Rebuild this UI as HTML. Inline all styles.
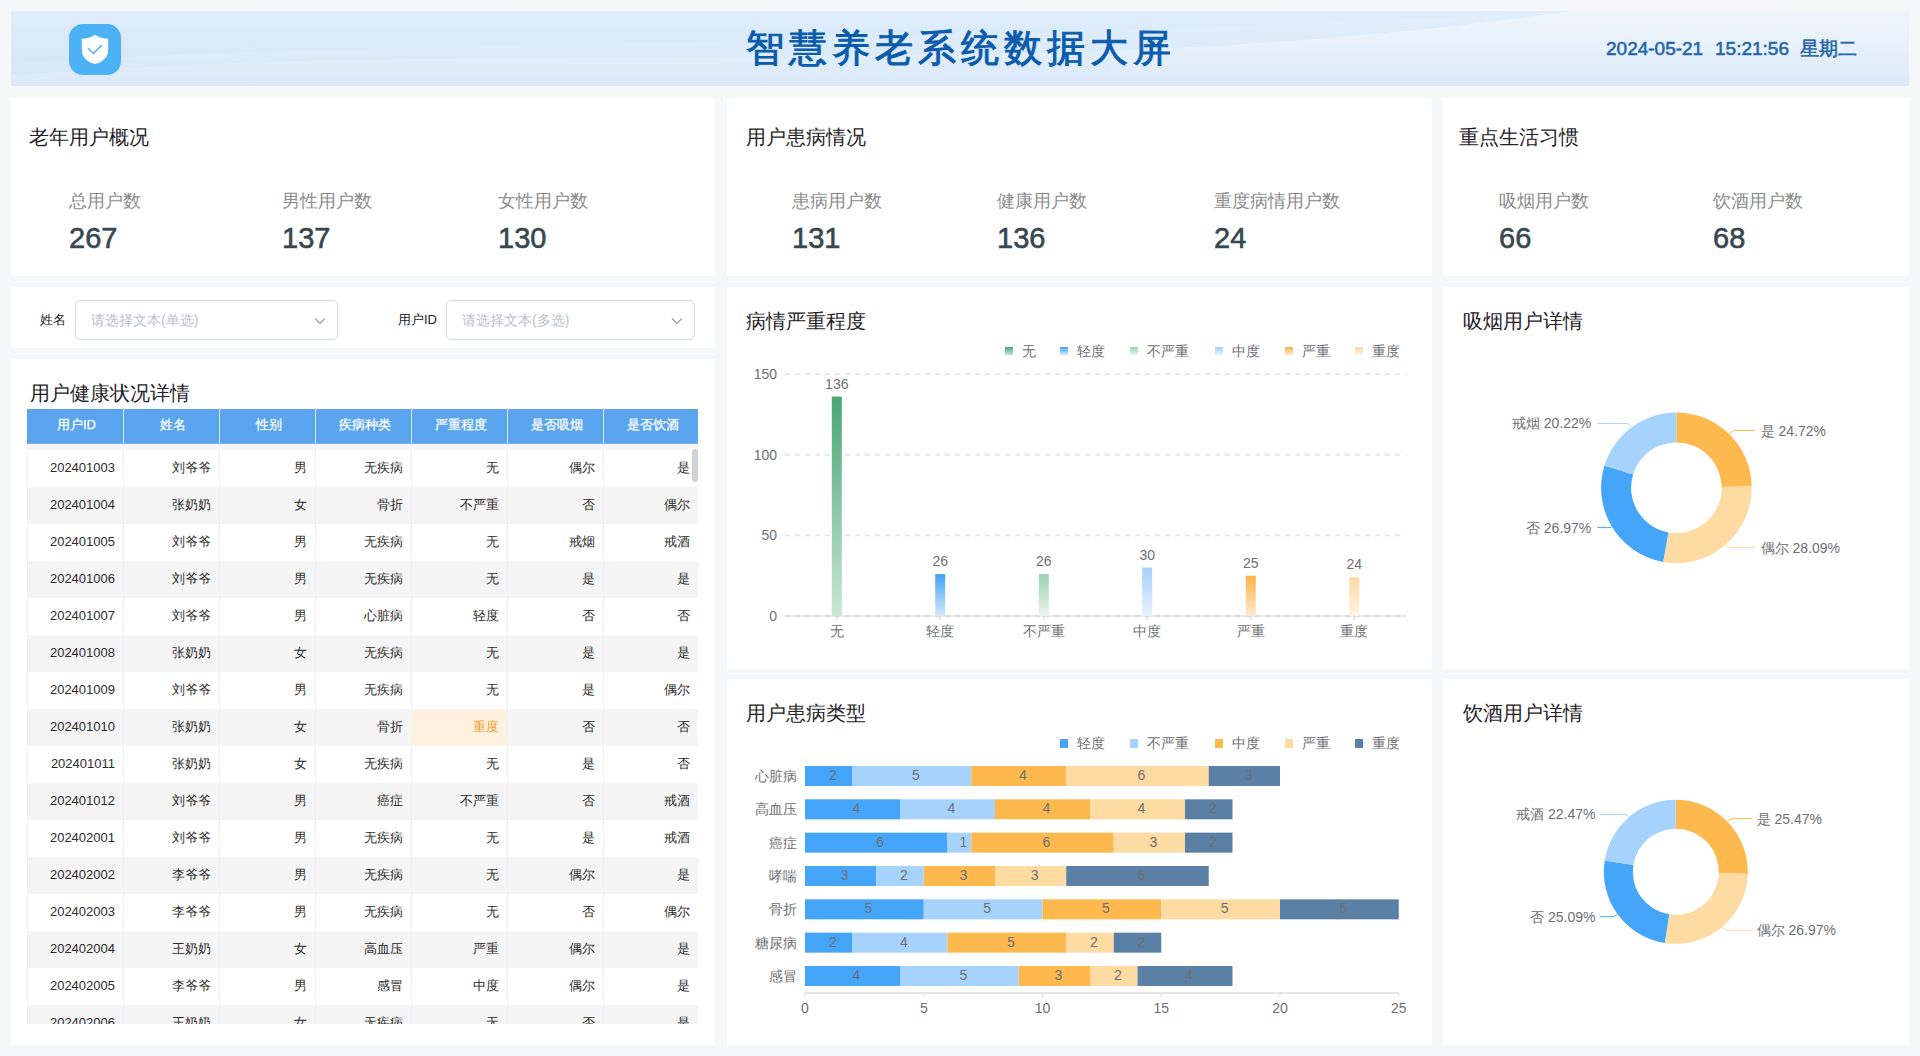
<!DOCTYPE html>
<html lang="zh">
<head>
<meta charset="utf-8">
<title>智慧养老系统数据大屏</title>
<style>
*{box-sizing:border-box;margin:0;padding:0}
html,body{width:1920px;height:1056px;overflow:hidden}
body{position:relative;background:#f5f7f9;font-family:"Liberation Sans",sans-serif;color:#222}
.abs{position:absolute}
.panel{position:absolute;background:#fff}
.ttl{position:absolute;font-size:20px;line-height:20px;color:#1f2329;white-space:nowrap}
.lbl{position:absolute;font-size:18px;line-height:18px;color:#8c8c8c;white-space:nowrap}
.num{position:absolute;font-size:29px;line-height:29px;color:#37474f;font-weight:normal;-webkit-text-stroke:0.6px #37474f;white-space:nowrap}
#hdr{left:11px;top:11px;width:1898px;height:75px;overflow:hidden;background:linear-gradient(180deg,#dfedfb 0%,#d8e8f9 60%,#cfe2f8 100%)}
.th{position:absolute;top:0;width:96px;height:34px;line-height:31px;text-align:center;color:#fff;font-size:13px;border-left:1px solid #d8e9fb;padding-left:3px;-webkit-text-stroke:0.25px #fff}
.th:first-child{border-left:none}
.tr{position:absolute;left:0;width:671px;height:37px}
.td{position:absolute;top:0;width:96px;height:37px;line-height:35px;text-align:right;padding-right:8px;font-size:13px;color:#2b2b2b;white-space:nowrap}
.td.hl{background:#fff1de;color:#f39a2b}
.vsep{position:absolute;top:0;width:1px;height:580px;background:#f0f1f3}
</style>
</head>
<body>
<!-- HEADER -->
<div id="hdr" class="abs">
  <svg class="abs" style="left:0;top:0" width="1898" height="75" viewBox="0 0 1898 75">
    <defs>
      <linearGradient id="hv" x1="0" y1="0" x2="0" y2="1"><stop offset="0" stop-color="#fff" stop-opacity="0.35"/><stop offset="1" stop-color="#fff" stop-opacity="0"/></linearGradient>
    </defs>
    <path d="M0 64 C 120 56, 250 49, 400 48 C 650 46, 900 46, 1100 40 C 1300 32, 1450 16, 1560 0 L1898 0 L1898 75 L0 75 Z" fill="#fff" fill-opacity="0.16"/>
    <path d="M0 52 C 100 46, 250 39, 400 37 C 700 30, 1000 24, 1250 14 C 1400 8, 1500 3, 1560 0 L1898 0 L1898 75 L0 75 Z" fill="#fff" fill-opacity="0.10"/>
    <path d="M1100 40 C 1300 32, 1450 16, 1560 0 L1898 0 L1898 75 L1100 75 Z" fill="url(#hv)"/>
  </svg>
  <div class="abs" style="left:58px;top:13px;width:52px;height:51px;border-radius:14px;background:#4db1f5"></div>
  <svg class="abs" style="left:58px;top:13px" width="52" height="51" viewBox="0 0 52 51">
    <path d="M12.8 14.85 C 17.5 14.8, 22 13.2, 26 10.7 C 30 13.2, 34.5 14.8, 39.2 14.85 L 39.2 26 C 39.2 33, 33.5 38.6, 26 40.1 C 18.5 38.6, 12.8 33, 12.8 26 Z" fill="#fff"/>
    <path d="M19.1 24.2 L 24.5 29.5 L 32.8 21.1" fill="none" stroke="#4db1f5" stroke-width="1.5"/>
  </svg>
  <div class="abs" style="left:735px;top:17px;font-size:38px;line-height:40px;font-weight:normal;-webkit-text-stroke:1px #0b5cad;color:#0b5cad;letter-spacing:5px;white-space:nowrap">智慧养老系统数据大屏</div>
  <div class="abs" style="left:1595px;top:27px;font-size:19px;line-height:22px;-webkit-text-stroke:0.55px #2466a8;color:#2466a8;white-space:nowrap">2024-05-21</div>
  <div class="abs" style="left:1704px;top:27px;font-size:19px;line-height:22px;-webkit-text-stroke:0.55px #2466a8;color:#2466a8;white-space:nowrap">15:21:56</div>
  <div class="abs" style="left:1789px;top:27px;font-size:19px;line-height:22px;-webkit-text-stroke:0.55px #2466a8;color:#2466a8;white-space:nowrap">星期二</div>
</div>

<!-- ROW 1 -->
<div class="panel" style="left:11px;top:98px;width:704px;height:178px">
  <div class="ttl" style="left:18px;top:29px">老年用户概况</div>
  <div class="lbl" style="left:58px;top:94px">总用户数</div>
  <div class="num" style="left:58px;top:126px">267</div>
  <div class="lbl" style="left:271px;top:94px">男性用户数</div>
  <div class="num" style="left:271px;top:126px">137</div>
  <div class="lbl" style="left:487px;top:94px">女性用户数</div>
  <div class="num" style="left:487px;top:126px">130</div>
</div>
<div class="panel" style="left:727px;top:98px;width:705px;height:178px">
  <div class="ttl" style="left:19px;top:29px">用户患病情况</div>
  <div class="lbl" style="left:65px;top:94px">患病用户数</div>
  <div class="num" style="left:65px;top:126px">131</div>
  <div class="lbl" style="left:270px;top:94px">健康用户数</div>
  <div class="num" style="left:270px;top:126px">136</div>
  <div class="lbl" style="left:487px;top:94px">重度病情用户数</div>
  <div class="num" style="left:487px;top:126px">24</div>
</div>
<div class="panel" style="left:1443px;top:98px;width:466px;height:178px">
  <div class="ttl" style="left:16px;top:29px">重点生活习惯</div>
  <div class="lbl" style="left:56px;top:94px">吸烟用户数</div>
  <div class="num" style="left:56px;top:126px">66</div>
  <div class="lbl" style="left:270px;top:94px">饮酒用户数</div>
  <div class="num" style="left:270px;top:126px">68</div>
</div>

<!-- FILTER -->
<div class="panel" style="left:11px;top:287px;width:704px;height:61px">
  <div class="abs" style="left:29px;top:26px;font-size:13px;line-height:14px;color:#222;white-space:nowrap">姓名</div>
  <div class="abs" style="left:64px;top:13px;width:263px;height:40px;border:1px solid #d5d9e2;border-radius:5px"></div>
  <div class="abs" style="left:80px;top:26px;font-size:14px;line-height:14px;color:#bcc0c7;white-space:nowrap">请选择文本(单选)</div>
  <svg class="abs" style="left:303px;top:30px" width="12" height="8" viewBox="0 0 12 8"><path d="M1 1.5 L6 6.5 L11 1.5" fill="none" stroke="#9aa0aa" stroke-width="1.2"/></svg>
  <div class="abs" style="left:387px;top:26px;font-size:13px;line-height:14px;color:#222;white-space:nowrap">用户ID</div>
  <div class="abs" style="left:435px;top:13px;width:249px;height:40px;border:1px solid #d5d9e2;border-radius:5px"></div>
  <div class="abs" style="left:451px;top:26px;font-size:14px;line-height:14px;color:#bcc0c7;white-space:nowrap">请选择文本(多选)</div>
  <svg class="abs" style="left:660px;top:30px" width="12" height="8" viewBox="0 0 12 8"><path d="M1 1.5 L6 6.5 L11 1.5" fill="none" stroke="#9aa0aa" stroke-width="1.2"/></svg>
</div>

<!-- TABLE -->
<div class="panel" style="left:11px;top:359px;width:704px;height:686px">
  <div class="ttl" style="left:19px;top:24px">用户健康状况详情</div>
  <div class="abs" style="left:16px;top:50px;width:671px;height:35px;background:#5ba5ee;border-bottom:1px solid #74b3f1">
<div class="th" style="left:0px;width:96px">用户ID</div>
<div class="th" style="left:96px;width:96px">姓名</div>
<div class="th" style="left:192px;width:96px">性别</div>
<div class="th" style="left:288px;width:96px">疾病种类</div>
<div class="th" style="left:384px;width:96px">严重程度</div>
<div class="th" style="left:480px;width:96px">是否吸烟</div>
<div class="th" style="left:576px;width:95px">是否饮酒</div>
  </div>
  <div class="abs" style="left:16px;top:85px;width:671px;height:580px;overflow:hidden">
<div class="tr" style="top:-31px;background:#f5f5f5">
<div class="td" style="left:0px;width:96px">202401002</div>
<div class="td" style="left:96px;width:96px">刘爷爷</div>
<div class="td" style="left:192px;width:96px">男</div>
<div class="td" style="left:288px;width:96px">无疾病</div>
<div class="td" style="left:384px;width:96px">无</div>
<div class="td" style="left:480px;width:96px">否</div>
<div class="td" style="left:576px;width:95px">否</div>
</div>
<div class="tr" style="top:6px;background:#fff">
<div class="td" style="left:0px;width:96px">202401003</div>
<div class="td" style="left:96px;width:96px">刘爷爷</div>
<div class="td" style="left:192px;width:96px">男</div>
<div class="td" style="left:288px;width:96px">无疾病</div>
<div class="td" style="left:384px;width:96px">无</div>
<div class="td" style="left:480px;width:96px">偶尔</div>
<div class="td" style="left:576px;width:95px">是</div>
</div>
<div class="tr" style="top:43px;background:#f5f5f5">
<div class="td" style="left:0px;width:96px">202401004</div>
<div class="td" style="left:96px;width:96px">张奶奶</div>
<div class="td" style="left:192px;width:96px">女</div>
<div class="td" style="left:288px;width:96px">骨折</div>
<div class="td" style="left:384px;width:96px">不严重</div>
<div class="td" style="left:480px;width:96px">否</div>
<div class="td" style="left:576px;width:95px">偶尔</div>
</div>
<div class="tr" style="top:80px;background:#fff">
<div class="td" style="left:0px;width:96px">202401005</div>
<div class="td" style="left:96px;width:96px">刘爷爷</div>
<div class="td" style="left:192px;width:96px">男</div>
<div class="td" style="left:288px;width:96px">无疾病</div>
<div class="td" style="left:384px;width:96px">无</div>
<div class="td" style="left:480px;width:96px">戒烟</div>
<div class="td" style="left:576px;width:95px">戒酒</div>
</div>
<div class="tr" style="top:117px;background:#f5f5f5">
<div class="td" style="left:0px;width:96px">202401006</div>
<div class="td" style="left:96px;width:96px">刘爷爷</div>
<div class="td" style="left:192px;width:96px">男</div>
<div class="td" style="left:288px;width:96px">无疾病</div>
<div class="td" style="left:384px;width:96px">无</div>
<div class="td" style="left:480px;width:96px">是</div>
<div class="td" style="left:576px;width:95px">是</div>
</div>
<div class="tr" style="top:154px;background:#fff">
<div class="td" style="left:0px;width:96px">202401007</div>
<div class="td" style="left:96px;width:96px">刘爷爷</div>
<div class="td" style="left:192px;width:96px">男</div>
<div class="td" style="left:288px;width:96px">心脏病</div>
<div class="td" style="left:384px;width:96px">轻度</div>
<div class="td" style="left:480px;width:96px">否</div>
<div class="td" style="left:576px;width:95px">否</div>
</div>
<div class="tr" style="top:191px;background:#f5f5f5">
<div class="td" style="left:0px;width:96px">202401008</div>
<div class="td" style="left:96px;width:96px">张奶奶</div>
<div class="td" style="left:192px;width:96px">女</div>
<div class="td" style="left:288px;width:96px">无疾病</div>
<div class="td" style="left:384px;width:96px">无</div>
<div class="td" style="left:480px;width:96px">是</div>
<div class="td" style="left:576px;width:95px">是</div>
</div>
<div class="tr" style="top:228px;background:#fff">
<div class="td" style="left:0px;width:96px">202401009</div>
<div class="td" style="left:96px;width:96px">刘爷爷</div>
<div class="td" style="left:192px;width:96px">男</div>
<div class="td" style="left:288px;width:96px">无疾病</div>
<div class="td" style="left:384px;width:96px">无</div>
<div class="td" style="left:480px;width:96px">是</div>
<div class="td" style="left:576px;width:95px">偶尔</div>
</div>
<div class="tr" style="top:265px;background:#f5f5f5">
<div class="td" style="left:0px;width:96px">202401010</div>
<div class="td" style="left:96px;width:96px">张奶奶</div>
<div class="td" style="left:192px;width:96px">女</div>
<div class="td" style="left:288px;width:96px">骨折</div>
<div class="td hl" style="left:384px;width:96px">重度</div>
<div class="td" style="left:480px;width:96px">否</div>
<div class="td" style="left:576px;width:95px">否</div>
</div>
<div class="tr" style="top:302px;background:#fff">
<div class="td" style="left:0px;width:96px">202401011</div>
<div class="td" style="left:96px;width:96px">张奶奶</div>
<div class="td" style="left:192px;width:96px">女</div>
<div class="td" style="left:288px;width:96px">无疾病</div>
<div class="td" style="left:384px;width:96px">无</div>
<div class="td" style="left:480px;width:96px">是</div>
<div class="td" style="left:576px;width:95px">否</div>
</div>
<div class="tr" style="top:339px;background:#f5f5f5">
<div class="td" style="left:0px;width:96px">202401012</div>
<div class="td" style="left:96px;width:96px">刘爷爷</div>
<div class="td" style="left:192px;width:96px">男</div>
<div class="td" style="left:288px;width:96px">癌症</div>
<div class="td" style="left:384px;width:96px">不严重</div>
<div class="td" style="left:480px;width:96px">否</div>
<div class="td" style="left:576px;width:95px">戒酒</div>
</div>
<div class="tr" style="top:376px;background:#fff">
<div class="td" style="left:0px;width:96px">202402001</div>
<div class="td" style="left:96px;width:96px">刘爷爷</div>
<div class="td" style="left:192px;width:96px">男</div>
<div class="td" style="left:288px;width:96px">无疾病</div>
<div class="td" style="left:384px;width:96px">无</div>
<div class="td" style="left:480px;width:96px">是</div>
<div class="td" style="left:576px;width:95px">戒酒</div>
</div>
<div class="tr" style="top:413px;background:#f5f5f5">
<div class="td" style="left:0px;width:96px">202402002</div>
<div class="td" style="left:96px;width:96px">李爷爷</div>
<div class="td" style="left:192px;width:96px">男</div>
<div class="td" style="left:288px;width:96px">无疾病</div>
<div class="td" style="left:384px;width:96px">无</div>
<div class="td" style="left:480px;width:96px">偶尔</div>
<div class="td" style="left:576px;width:95px">是</div>
</div>
<div class="tr" style="top:450px;background:#fff">
<div class="td" style="left:0px;width:96px">202402003</div>
<div class="td" style="left:96px;width:96px">李爷爷</div>
<div class="td" style="left:192px;width:96px">男</div>
<div class="td" style="left:288px;width:96px">无疾病</div>
<div class="td" style="left:384px;width:96px">无</div>
<div class="td" style="left:480px;width:96px">否</div>
<div class="td" style="left:576px;width:95px">偶尔</div>
</div>
<div class="tr" style="top:487px;background:#f5f5f5">
<div class="td" style="left:0px;width:96px">202402004</div>
<div class="td" style="left:96px;width:96px">王奶奶</div>
<div class="td" style="left:192px;width:96px">女</div>
<div class="td" style="left:288px;width:96px">高血压</div>
<div class="td" style="left:384px;width:96px">严重</div>
<div class="td" style="left:480px;width:96px">偶尔</div>
<div class="td" style="left:576px;width:95px">是</div>
</div>
<div class="tr" style="top:524px;background:#fff">
<div class="td" style="left:0px;width:96px">202402005</div>
<div class="td" style="left:96px;width:96px">李爷爷</div>
<div class="td" style="left:192px;width:96px">男</div>
<div class="td" style="left:288px;width:96px">感冒</div>
<div class="td" style="left:384px;width:96px">中度</div>
<div class="td" style="left:480px;width:96px">偶尔</div>
<div class="td" style="left:576px;width:95px">是</div>
</div>
<div class="tr" style="top:561px;background:#f5f5f5">
<div class="td" style="left:0px;width:96px">202402006</div>
<div class="td" style="left:96px;width:96px">王奶奶</div>
<div class="td" style="left:192px;width:96px">女</div>
<div class="td" style="left:288px;width:96px">无疾病</div>
<div class="td" style="left:384px;width:96px">无</div>
<div class="td" style="left:480px;width:96px">否</div>
<div class="td" style="left:576px;width:95px">是</div>
</div>
<div class="tr" style="top:598px;background:#fff">
<div class="td" style="left:0px;width:96px">202402007</div>
<div class="td" style="left:96px;width:96px">李爷爷</div>
<div class="td" style="left:192px;width:96px">男</div>
<div class="td" style="left:288px;width:96px">无疾病</div>
<div class="td" style="left:384px;width:96px">无</div>
<div class="td" style="left:480px;width:96px">否</div>
<div class="td" style="left:576px;width:95px">否</div>
</div>
<div class="vsep" style="left:0px"></div>
<div class="vsep" style="left:96px"></div>
<div class="vsep" style="left:192px"></div>
<div class="vsep" style="left:288px"></div>
<div class="vsep" style="left:384px"></div>
<div class="vsep" style="left:480px"></div>
<div class="vsep" style="left:576px"></div>
    <div class="abs" style="left:665px;top:5px;width:6px;height:33px;border-radius:3px;background:#cfd2d6"></div>
  </div>
</div>

<!-- CHART PANELS -->
<div class="panel" style="left:727px;top:287px;width:705px;height:382px">
  <div class="ttl" style="left:19px;top:24px">病情严重程度</div>
<svg class="abs" style="left:0;top:0" width="705" height="382" viewBox="727 287 705 382">
<defs>
<linearGradient id="g0" x1="0" y1="0" x2="0" y2="1"><stop offset="0" stop-color="#48a574"/><stop offset="1" stop-color="#c9e7d6"/></linearGradient>
<linearGradient id="g1" x1="0" y1="0" x2="0" y2="1"><stop offset="0" stop-color="#44a3f7"/><stop offset="1" stop-color="#d3e9fd"/></linearGradient>
<linearGradient id="g2" x1="0" y1="0" x2="0" y2="1"><stop offset="0" stop-color="#9bd2b3"/><stop offset="1" stop-color="#e9f5ee"/></linearGradient>
<linearGradient id="g3" x1="0" y1="0" x2="0" y2="1"><stop offset="0" stop-color="#a3d0fc"/><stop offset="1" stop-color="#e8f3fe"/></linearGradient>
<linearGradient id="g4" x1="0" y1="0" x2="0" y2="1"><stop offset="0" stop-color="#fdb243"/><stop offset="1" stop-color="#fdebd0"/></linearGradient>
<linearGradient id="g5" x1="0" y1="0" x2="0" y2="1"><stop offset="0" stop-color="#fdd7a0"/><stop offset="1" stop-color="#fef4e6"/></linearGradient>
</defs>
<rect x="1005" y="347" width="8" height="8" fill="url(#g0)"/>
<text x="1022" y="356" font-size="14" fill="#6e6f73" font-family="Liberation Sans, sans-serif">无</text>
<rect x="1060" y="347" width="8" height="8" fill="url(#g1)"/>
<text x="1077" y="356" font-size="14" fill="#6e6f73" font-family="Liberation Sans, sans-serif">轻度</text>
<rect x="1130" y="347" width="8" height="8" fill="url(#g2)"/>
<text x="1147" y="356" font-size="14" fill="#6e6f73" font-family="Liberation Sans, sans-serif">不严重</text>
<rect x="1215" y="347" width="8" height="8" fill="url(#g3)"/>
<text x="1232" y="356" font-size="14" fill="#6e6f73" font-family="Liberation Sans, sans-serif">中度</text>
<rect x="1285" y="347" width="8" height="8" fill="url(#g4)"/>
<text x="1302" y="356" font-size="14" fill="#6e6f73" font-family="Liberation Sans, sans-serif">严重</text>
<rect x="1355" y="347" width="8" height="8" fill="url(#g5)"/>
<text x="1372" y="356" font-size="14" fill="#6e6f73" font-family="Liberation Sans, sans-serif">重度</text>
<line x1="785" y1="374.0" x2="1406" y2="374.0" stroke="#e3e7ed" stroke-width="2" stroke-dasharray="5 5"/>
<line x1="785" y1="454.7" x2="1406" y2="454.7" stroke="#e3e7ed" stroke-width="2" stroke-dasharray="5 5"/>
<line x1="785" y1="535.3" x2="1406" y2="535.3" stroke="#e3e7ed" stroke-width="2" stroke-dasharray="5 5"/>
<line x1="785" y1="616" x2="1406" y2="616" stroke="#e4e4e4" stroke-width="1.5"/>
<line x1="785" y1="616" x2="1406" y2="616" stroke="#d7dbe1" stroke-width="2" stroke-dasharray="5 5"/>
<text x="777" y="379.0" font-size="14" text-anchor="end" fill="#6e6f73" font-family="Liberation Sans, sans-serif">150</text>
<text x="777" y="459.7" font-size="14" text-anchor="end" fill="#6e6f73" font-family="Liberation Sans, sans-serif">100</text>
<text x="777" y="540.3" font-size="14" text-anchor="end" fill="#6e6f73" font-family="Liberation Sans, sans-serif">50</text>
<text x="777" y="621.0" font-size="14" text-anchor="end" fill="#6e6f73" font-family="Liberation Sans, sans-serif">0</text>
<rect x="831.8" y="396.6" width="10" height="219.4" fill="url(#g0)"/>
<text x="836.8" y="388.6" font-size="14" text-anchor="middle" fill="#6e6f73" font-family="Liberation Sans, sans-serif">136</text>
<line x1="836.8" y1="616" x2="836.8" y2="620" stroke="#cfd3d8" stroke-width="1"/>
<text x="836.8" y="636" font-size="14" text-anchor="middle" fill="#6e6f73" font-family="Liberation Sans, sans-serif">无</text>
<rect x="935.2" y="574.1" width="10" height="41.9" fill="url(#g1)"/>
<text x="940.2" y="566.1" font-size="14" text-anchor="middle" fill="#6e6f73" font-family="Liberation Sans, sans-serif">26</text>
<line x1="940.2" y1="616" x2="940.2" y2="620" stroke="#cfd3d8" stroke-width="1"/>
<text x="940.2" y="636" font-size="14" text-anchor="middle" fill="#6e6f73" font-family="Liberation Sans, sans-serif">轻度</text>
<rect x="1038.8" y="574.1" width="10" height="41.9" fill="url(#g2)"/>
<text x="1043.8" y="566.1" font-size="14" text-anchor="middle" fill="#6e6f73" font-family="Liberation Sans, sans-serif">26</text>
<line x1="1043.8" y1="616" x2="1043.8" y2="620" stroke="#cfd3d8" stroke-width="1"/>
<text x="1043.8" y="636" font-size="14" text-anchor="middle" fill="#6e6f73" font-family="Liberation Sans, sans-serif">不严重</text>
<rect x="1142.2" y="567.6" width="10" height="48.4" fill="url(#g3)"/>
<text x="1147.2" y="559.6" font-size="14" text-anchor="middle" fill="#6e6f73" font-family="Liberation Sans, sans-serif">30</text>
<line x1="1147.2" y1="616" x2="1147.2" y2="620" stroke="#cfd3d8" stroke-width="1"/>
<text x="1147.2" y="636" font-size="14" text-anchor="middle" fill="#6e6f73" font-family="Liberation Sans, sans-serif">中度</text>
<rect x="1245.8" y="575.7" width="10" height="40.3" fill="url(#g4)"/>
<text x="1250.8" y="567.7" font-size="14" text-anchor="middle" fill="#6e6f73" font-family="Liberation Sans, sans-serif">25</text>
<line x1="1250.8" y1="616" x2="1250.8" y2="620" stroke="#cfd3d8" stroke-width="1"/>
<text x="1250.8" y="636" font-size="14" text-anchor="middle" fill="#6e6f73" font-family="Liberation Sans, sans-serif">严重</text>
<rect x="1349.2" y="577.3" width="10" height="38.7" fill="url(#g5)"/>
<text x="1354.2" y="569.3" font-size="14" text-anchor="middle" fill="#6e6f73" font-family="Liberation Sans, sans-serif">24</text>
<line x1="1354.2" y1="616" x2="1354.2" y2="620" stroke="#cfd3d8" stroke-width="1"/>
<text x="1354.2" y="636" font-size="14" text-anchor="middle" fill="#6e6f73" font-family="Liberation Sans, sans-serif">重度</text>
</svg>
</div>
<div class="panel" style="left:727px;top:679px;width:705px;height:366px">
  <div class="ttl" style="left:19px;top:24px">用户患病类型</div>
<svg class="abs" style="left:0;top:0" width="705" height="366" viewBox="727 679 705 366">
<rect x="1060" y="739" width="8" height="9" fill="#45a5f8"/>
<text x="1077" y="748" font-size="14" fill="#6e6f73" font-family="Liberation Sans, sans-serif">轻度</text>
<rect x="1130" y="739" width="8" height="9" fill="#a6d3fc"/>
<text x="1147" y="748" font-size="14" fill="#6e6f73" font-family="Liberation Sans, sans-serif">不严重</text>
<rect x="1215" y="739" width="8" height="9" fill="#fdb94e"/>
<text x="1232" y="748" font-size="14" fill="#6e6f73" font-family="Liberation Sans, sans-serif">中度</text>
<rect x="1285" y="739" width="8" height="9" fill="#fedba2"/>
<text x="1302" y="748" font-size="14" fill="#6e6f73" font-family="Liberation Sans, sans-serif">严重</text>
<rect x="1355" y="739" width="8" height="9" fill="#5b80a5"/>
<text x="1372" y="748" font-size="14" fill="#6e6f73" font-family="Liberation Sans, sans-serif">重度</text>
<text x="797" y="781.0" font-size="14" text-anchor="end" fill="#6e6f73" font-family="Liberation Sans, sans-serif">心脏病</text>
<rect x="805.00" y="766.00" width="47.50" height="20" fill="#45a5f8"/>
<text x="832.8" y="780.0" font-size="14" text-anchor="middle" fill="#6e6f73" font-family="Liberation Sans, sans-serif">2</text>
<rect x="852.50" y="766.00" width="118.75" height="20" fill="#a6d3fc"/>
<text x="915.9" y="780.0" font-size="14" text-anchor="middle" fill="#6e6f73" font-family="Liberation Sans, sans-serif">5</text>
<rect x="971.25" y="766.00" width="95.00" height="20" fill="#fdb94e"/>
<text x="1022.8" y="780.0" font-size="14" text-anchor="middle" fill="#6e6f73" font-family="Liberation Sans, sans-serif">4</text>
<rect x="1066.25" y="766.00" width="142.50" height="20" fill="#fedba2"/>
<text x="1141.5" y="780.0" font-size="14" text-anchor="middle" fill="#6e6f73" font-family="Liberation Sans, sans-serif">6</text>
<rect x="1208.75" y="766.00" width="71.25" height="20" fill="#5b80a5"/>
<text x="1248.4" y="780.0" font-size="14" text-anchor="middle" fill="#6e6f73" font-family="Liberation Sans, sans-serif">3</text>
<text x="797" y="814.3" font-size="14" text-anchor="end" fill="#6e6f73" font-family="Liberation Sans, sans-serif">高血压</text>
<rect x="805.00" y="799.33" width="95.00" height="20" fill="#45a5f8"/>
<text x="856.5" y="813.3" font-size="14" text-anchor="middle" fill="#6e6f73" font-family="Liberation Sans, sans-serif">4</text>
<rect x="900.00" y="799.33" width="95.00" height="20" fill="#a6d3fc"/>
<text x="951.5" y="813.3" font-size="14" text-anchor="middle" fill="#6e6f73" font-family="Liberation Sans, sans-serif">4</text>
<rect x="995.00" y="799.33" width="95.00" height="20" fill="#fdb94e"/>
<text x="1046.5" y="813.3" font-size="14" text-anchor="middle" fill="#6e6f73" font-family="Liberation Sans, sans-serif">4</text>
<rect x="1090.00" y="799.33" width="95.00" height="20" fill="#fedba2"/>
<text x="1141.5" y="813.3" font-size="14" text-anchor="middle" fill="#6e6f73" font-family="Liberation Sans, sans-serif">4</text>
<rect x="1185.00" y="799.33" width="47.50" height="20" fill="#5b80a5"/>
<text x="1212.8" y="813.3" font-size="14" text-anchor="middle" fill="#6e6f73" font-family="Liberation Sans, sans-serif">2</text>
<text x="797" y="847.7" font-size="14" text-anchor="end" fill="#6e6f73" font-family="Liberation Sans, sans-serif">癌症</text>
<rect x="805.00" y="832.66" width="142.50" height="20" fill="#45a5f8"/>
<text x="880.2" y="846.7" font-size="14" text-anchor="middle" fill="#6e6f73" font-family="Liberation Sans, sans-serif">6</text>
<rect x="947.50" y="832.66" width="23.75" height="20" fill="#a6d3fc"/>
<text x="963.4" y="846.7" font-size="14" text-anchor="middle" fill="#6e6f73" font-family="Liberation Sans, sans-serif">1</text>
<rect x="971.25" y="832.66" width="142.50" height="20" fill="#fdb94e"/>
<text x="1046.5" y="846.7" font-size="14" text-anchor="middle" fill="#6e6f73" font-family="Liberation Sans, sans-serif">6</text>
<rect x="1113.75" y="832.66" width="71.25" height="20" fill="#fedba2"/>
<text x="1153.4" y="846.7" font-size="14" text-anchor="middle" fill="#6e6f73" font-family="Liberation Sans, sans-serif">3</text>
<rect x="1185.00" y="832.66" width="47.50" height="20" fill="#5b80a5"/>
<text x="1212.8" y="846.7" font-size="14" text-anchor="middle" fill="#6e6f73" font-family="Liberation Sans, sans-serif">2</text>
<text x="797" y="881.0" font-size="14" text-anchor="end" fill="#6e6f73" font-family="Liberation Sans, sans-serif">哮喘</text>
<rect x="805.00" y="865.99" width="71.25" height="20" fill="#45a5f8"/>
<text x="844.6" y="880.0" font-size="14" text-anchor="middle" fill="#6e6f73" font-family="Liberation Sans, sans-serif">3</text>
<rect x="876.25" y="865.99" width="47.50" height="20" fill="#a6d3fc"/>
<text x="904.0" y="880.0" font-size="14" text-anchor="middle" fill="#6e6f73" font-family="Liberation Sans, sans-serif">2</text>
<rect x="923.75" y="865.99" width="71.25" height="20" fill="#fdb94e"/>
<text x="963.4" y="880.0" font-size="14" text-anchor="middle" fill="#6e6f73" font-family="Liberation Sans, sans-serif">3</text>
<rect x="995.00" y="865.99" width="71.25" height="20" fill="#fedba2"/>
<text x="1034.6" y="880.0" font-size="14" text-anchor="middle" fill="#6e6f73" font-family="Liberation Sans, sans-serif">3</text>
<rect x="1066.25" y="865.99" width="142.50" height="20" fill="#5b80a5"/>
<text x="1141.5" y="880.0" font-size="14" text-anchor="middle" fill="#6e6f73" font-family="Liberation Sans, sans-serif">6</text>
<text x="797" y="914.3" font-size="14" text-anchor="end" fill="#6e6f73" font-family="Liberation Sans, sans-serif">骨折</text>
<rect x="805.00" y="899.32" width="118.75" height="20" fill="#45a5f8"/>
<text x="868.4" y="913.3" font-size="14" text-anchor="middle" fill="#6e6f73" font-family="Liberation Sans, sans-serif">5</text>
<rect x="923.75" y="899.32" width="118.75" height="20" fill="#a6d3fc"/>
<text x="987.1" y="913.3" font-size="14" text-anchor="middle" fill="#6e6f73" font-family="Liberation Sans, sans-serif">5</text>
<rect x="1042.50" y="899.32" width="118.75" height="20" fill="#fdb94e"/>
<text x="1105.9" y="913.3" font-size="14" text-anchor="middle" fill="#6e6f73" font-family="Liberation Sans, sans-serif">5</text>
<rect x="1161.25" y="899.32" width="118.75" height="20" fill="#fedba2"/>
<text x="1224.6" y="913.3" font-size="14" text-anchor="middle" fill="#6e6f73" font-family="Liberation Sans, sans-serif">5</text>
<rect x="1280.00" y="899.32" width="118.75" height="20" fill="#5b80a5"/>
<text x="1343.4" y="913.3" font-size="14" text-anchor="middle" fill="#6e6f73" font-family="Liberation Sans, sans-serif">5</text>
<text x="797" y="947.6" font-size="14" text-anchor="end" fill="#6e6f73" font-family="Liberation Sans, sans-serif">糖尿病</text>
<rect x="805.00" y="932.65" width="47.50" height="20" fill="#45a5f8"/>
<text x="832.8" y="946.6" font-size="14" text-anchor="middle" fill="#6e6f73" font-family="Liberation Sans, sans-serif">2</text>
<rect x="852.50" y="932.65" width="95.00" height="20" fill="#a6d3fc"/>
<text x="904.0" y="946.6" font-size="14" text-anchor="middle" fill="#6e6f73" font-family="Liberation Sans, sans-serif">4</text>
<rect x="947.50" y="932.65" width="118.75" height="20" fill="#fdb94e"/>
<text x="1010.9" y="946.6" font-size="14" text-anchor="middle" fill="#6e6f73" font-family="Liberation Sans, sans-serif">5</text>
<rect x="1066.25" y="932.65" width="47.50" height="20" fill="#fedba2"/>
<text x="1094.0" y="946.6" font-size="14" text-anchor="middle" fill="#6e6f73" font-family="Liberation Sans, sans-serif">2</text>
<rect x="1113.75" y="932.65" width="47.50" height="20" fill="#5b80a5"/>
<text x="1141.5" y="946.6" font-size="14" text-anchor="middle" fill="#6e6f73" font-family="Liberation Sans, sans-serif">2</text>
<text x="797" y="981.0" font-size="14" text-anchor="end" fill="#6e6f73" font-family="Liberation Sans, sans-serif">感冒</text>
<rect x="805.00" y="965.98" width="95.00" height="20" fill="#45a5f8"/>
<text x="856.5" y="980.0" font-size="14" text-anchor="middle" fill="#6e6f73" font-family="Liberation Sans, sans-serif">4</text>
<rect x="900.00" y="965.98" width="118.75" height="20" fill="#a6d3fc"/>
<text x="963.4" y="980.0" font-size="14" text-anchor="middle" fill="#6e6f73" font-family="Liberation Sans, sans-serif">5</text>
<rect x="1018.75" y="965.98" width="71.25" height="20" fill="#fdb94e"/>
<text x="1058.4" y="980.0" font-size="14" text-anchor="middle" fill="#6e6f73" font-family="Liberation Sans, sans-serif">3</text>
<rect x="1090.00" y="965.98" width="47.50" height="20" fill="#fedba2"/>
<text x="1117.8" y="980.0" font-size="14" text-anchor="middle" fill="#6e6f73" font-family="Liberation Sans, sans-serif">2</text>
<rect x="1137.50" y="965.98" width="95.00" height="20" fill="#5b80a5"/>
<text x="1189.0" y="980.0" font-size="14" text-anchor="middle" fill="#6e6f73" font-family="Liberation Sans, sans-serif">4</text>
<line x1="805" y1="993" x2="1399" y2="993" stroke="#dcdcdc" stroke-width="1.5"/>
<line x1="805.0" y1="993" x2="805.0" y2="997" stroke="#dcdcdc" stroke-width="1"/>
<text x="805.0" y="1013" font-size="14" text-anchor="middle" fill="#6e6f73" font-family="Liberation Sans, sans-serif">0</text>
<line x1="923.8" y1="993" x2="923.8" y2="997" stroke="#dcdcdc" stroke-width="1"/>
<text x="923.8" y="1013" font-size="14" text-anchor="middle" fill="#6e6f73" font-family="Liberation Sans, sans-serif">5</text>
<line x1="1042.5" y1="993" x2="1042.5" y2="997" stroke="#dcdcdc" stroke-width="1"/>
<text x="1042.5" y="1013" font-size="14" text-anchor="middle" fill="#6e6f73" font-family="Liberation Sans, sans-serif">10</text>
<line x1="1161.2" y1="993" x2="1161.2" y2="997" stroke="#dcdcdc" stroke-width="1"/>
<text x="1161.2" y="1013" font-size="14" text-anchor="middle" fill="#6e6f73" font-family="Liberation Sans, sans-serif">15</text>
<line x1="1280.0" y1="993" x2="1280.0" y2="997" stroke="#dcdcdc" stroke-width="1"/>
<text x="1280.0" y="1013" font-size="14" text-anchor="middle" fill="#6e6f73" font-family="Liberation Sans, sans-serif">20</text>
<line x1="1398.8" y1="993" x2="1398.8" y2="997" stroke="#dcdcdc" stroke-width="1"/>
<text x="1398.8" y="1013" font-size="14" text-anchor="middle" fill="#6e6f73" font-family="Liberation Sans, sans-serif">25</text>
</svg>
</div>
<div class="panel" style="left:1443px;top:287px;width:466px;height:382px">
  <div class="ttl" style="left:20px;top:24px">吸烟用户详情</div>
<svg class="abs" style="left:0;top:0" width="466" height="382" viewBox="1443 287 466 382">
<path d="M1676.40 412.50 A75.3 75.3 0 0 1 1751.69 486.48 L1721.69 487.00 A45.3 45.3 0 0 0 1676.40 442.50 Z" fill="#fdb94e"/>
<path d="M1751.69 486.48 A75.3 75.3 0 0 1 1663.17 561.93 L1668.44 532.40 A45.3 45.3 0 0 0 1721.69 487.00 Z" fill="#fedba2"/>
<path d="M1663.17 561.93 A75.3 75.3 0 0 1 1604.47 465.52 L1633.13 474.40 A45.3 45.3 0 0 0 1668.44 532.40 Z" fill="#45a5f8"/>
<path d="M1604.47 465.52 A75.3 75.3 0 0 1 1676.40 412.50 L1676.40 442.50 A45.3 45.3 0 0 0 1633.13 474.40 Z" fill="#a6d3fc"/>
<polyline points="1729.5,433.7 1733.5,430.6 1755,430.6" fill="none" stroke="#fdb94e" stroke-width="1"/>
<text x="1760.7" y="435.6" font-size="14" text-anchor="start" fill="#6e6f73" font-family="Liberation Sans, sans-serif">是 24.72%</text>
<polyline points="1725.6,545.5 1729.6,547.5 1755,547.5" fill="none" stroke="#fedba2" stroke-width="1"/>
<text x="1760.7" y="552.5" font-size="14" text-anchor="start" fill="#6e6f73" font-family="Liberation Sans, sans-serif">偶尔 28.09%</text>
<polyline points="1611.7,527.2 1607.7,527.6 1597,527.6" fill="none" stroke="#45a5f8" stroke-width="1"/>
<text x="1591.3" y="532.6" font-size="14" text-anchor="end" fill="#6e6f73" font-family="Liberation Sans, sans-serif">否 26.97%</text>
<polyline points="1631.4,426.8 1627.4,423.4 1597,423.4" fill="none" stroke="#a6d3fc" stroke-width="1"/>
<text x="1591.3" y="428.4" font-size="14" text-anchor="end" fill="#6e6f73" font-family="Liberation Sans, sans-serif">戒烟 20.22%</text>
</svg>
</div>
<div class="panel" style="left:1443px;top:679px;width:466px;height:366px">
  <div class="ttl" style="left:20px;top:24px">饮酒用户详情</div>
<svg class="abs" style="left:0;top:0" width="466" height="366" viewBox="1443 679 466 366">
<path d="M1675.80 799.80 A72 72 0 0 1 1747.77 873.93 L1718.78 873.07 A43 43 0 0 0 1675.80 828.80 Z" fill="#fdb94e"/>
<path d="M1747.77 873.93 A72 72 0 0 1 1664.80 942.96 L1669.23 914.30 A43 43 0 0 0 1718.78 873.07 Z" fill="#fedba2"/>
<path d="M1664.80 942.96 A72 72 0 0 1 1604.71 860.40 L1633.34 864.99 A43 43 0 0 0 1669.23 914.30 Z" fill="#45a5f8"/>
<path d="M1604.71 860.40 A72 72 0 0 1 1675.80 799.80 L1675.80 828.80 A43 43 0 0 0 1633.34 864.99 Z" fill="#a6d3fc"/>
<polyline points="1727.8,821.3 1731.8,818.6 1752,818.6" fill="none" stroke="#fdb94e" stroke-width="1"/>
<text x="1756.6" y="823.6" font-size="14" text-anchor="start" fill="#6e6f73" font-family="Liberation Sans, sans-serif">是 25.47%</text>
<polyline points="1722.2,927.5 1726.2,930.2 1752,930.2" fill="none" stroke="#fedba2" stroke-width="1"/>
<text x="1756.6" y="935.2" font-size="14" text-anchor="start" fill="#6e6f73" font-family="Liberation Sans, sans-serif">偶尔 26.97%</text>
<polyline points="1617.2,914.5 1613.2,916.7 1600,916.7" fill="none" stroke="#45a5f8" stroke-width="1"/>
<text x="1595.5" y="921.7" font-size="14" text-anchor="end" fill="#6e6f73" font-family="Liberation Sans, sans-serif">否 25.09%</text>
<polyline points="1628.8,816.6 1624.8,814.4 1600,814.4" fill="none" stroke="#a6d3fc" stroke-width="1"/>
<text x="1595.5" y="819.4" font-size="14" text-anchor="end" fill="#6e6f73" font-family="Liberation Sans, sans-serif">戒酒 22.47%</text>
</svg>
</div>

</body>
</html>
